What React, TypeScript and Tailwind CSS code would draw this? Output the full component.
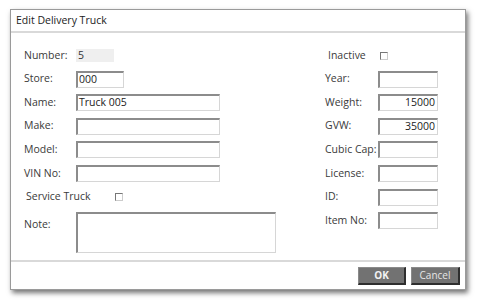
const font = { fontFamily: '"Segoe UI", "Open Sans", "Noto Sans", sans-serif' };

function Input({ w, value, right }: { w: string; value?: string; right?: boolean }) {
  return (
    <div
      className={`${w} h-[17px] bg-white border-t-2 border-l-2 border-r border-b border-t-[#8c8c8c] border-l-[#8c8c8c] border-r-[#d6d6d6] border-b-[#d6d6d6] text-[10.5px] leading-[13px] text-[#222] px-[1px] whitespace-nowrap ${
        right ? 'text-right pr-[2px]' : ''
      }`}
    >
      {value}
    </div>
  );
}

function Check() {
  return <div className="w-[8px] h-[8px] border border-t-[#777] border-l-[#777] border-r-[#ccc] border-b-[#ccc] bg-white" />;
}

function Row({ label, lw, children }: { label: string; lw: string; children: React.ReactNode }) {
  return (
    <div className="flex items-center h-[17px]">
      <span className={`${lw} text-[10.5px] text-[#3a3a3a] whitespace-nowrap`}>{label}</span>
      {children}
    </div>
  );
}

export default function App() {
  return (
    <div className="w-[478px] h-[300px] bg-white pt-[9px] pl-[10px]" style={font}>
      <div className="w-[456px] h-[281px] bg-white border border-[#9a9a9a] shadow-[2px_3px_5px_rgba(0,0,0,0.55)] flex flex-col">
        <div className="h-[23px] flex items-center pl-[5px] text-[10.5px] text-[#222] border-b-2 border-[#d9d9d9]">
          Edit Delivery Truck
        </div>
        <div className="flex-1 flex pl-[13px] pt-[14px]">
          <div className="w-[300px] flex flex-col gap-[6.6px]">
            <Row label="Number:" lw="w-[52px]">
              <div className="w-[38px] h-[13px] bg-[#efefef] text-[10.5px] leading-[13px] text-[#333] pl-[2px]">5</div>
            </Row>
            <Row label="Store:" lw="w-[52px]">
              <Input w="w-[48px]" value="000" />
            </Row>
            <Row label="Name:" lw="w-[52px]">
              <Input w="w-[144px]" value="Truck 005" />
            </Row>
            <Row label="Make:" lw="w-[52px]">
              <Input w="w-[144px]" />
            </Row>
            <Row label="Model:" lw="w-[52px]">
              <Input w="w-[144px]" />
            </Row>
            <Row label="VIN No:" lw="w-[52px]">
              <Input w="w-[144px]" />
            </Row>
            <div className="flex items-center h-[17px] pl-[2px]">
              <span className="w-[89px] text-[10.5px] text-[#3a3a3a]">Service Truck</span>
              <Check />
            </div>
            <div className="flex items-start">
              <span className="w-[52px] text-[10.5px] text-[#3a3a3a] mt-[5px]">Note:</span>
              <Input w="w-[200px] !h-[41px]" />
            </div>
          </div>
          <div className="flex flex-col gap-[6.6px] ml-[1px]">
            <div className="flex items-center h-[17px] pl-[3px]">
              <span className="w-[52px] text-[10.5px] text-[#3a3a3a]">Inactive</span>
              <Check />
            </div>
            <Row label="Year:" lw="w-[53px]">
              <Input w="w-[60px]" />
            </Row>
            <Row label="Weight:" lw="w-[53px]">
              <Input w="w-[60px]" value="15000" right />
            </Row>
            <Row label="GVW:" lw="w-[53px]">
              <Input w="w-[60px]" value="35000" right />
            </Row>
            <Row label="Cubic Cap:" lw="w-[53px]">
              <Input w="w-[60px]" />
            </Row>
            <Row label="License:" lw="w-[53px]">
              <Input w="w-[60px]" />
            </Row>
            <Row label="ID:" lw="w-[53px]">
              <Input w="w-[60px]" />
            </Row>
            <Row label="Item No:" lw="w-[53px]">
              <Input w="w-[60px]" />
            </Row>
          </div>
        </div>
        <div className="h-[29px] border-t-2 border-[#d9d9d9] flex items-center justify-end gap-[5px] pr-[5px]">
          <button className="w-[48px] h-[18px] bg-[#727272] border border-[#8a8a8a] border-r-2 border-b-2 border-r-[#2e2e2e] border-b-[#2e2e2e] text-[10px] font-bold text-[#f2f2f2] leading-none">
            OK
          </button>
          <button className="w-[49px] h-[18px] bg-[#727272] border border-[#8a8a8a] border-r-2 border-b-2 border-r-[#2e2e2e] border-b-[#2e2e2e] text-[10px] text-[#e6e6e6] leading-none">
            Cancel
          </button>
        </div>
      </div>
    </div>
  );
}
